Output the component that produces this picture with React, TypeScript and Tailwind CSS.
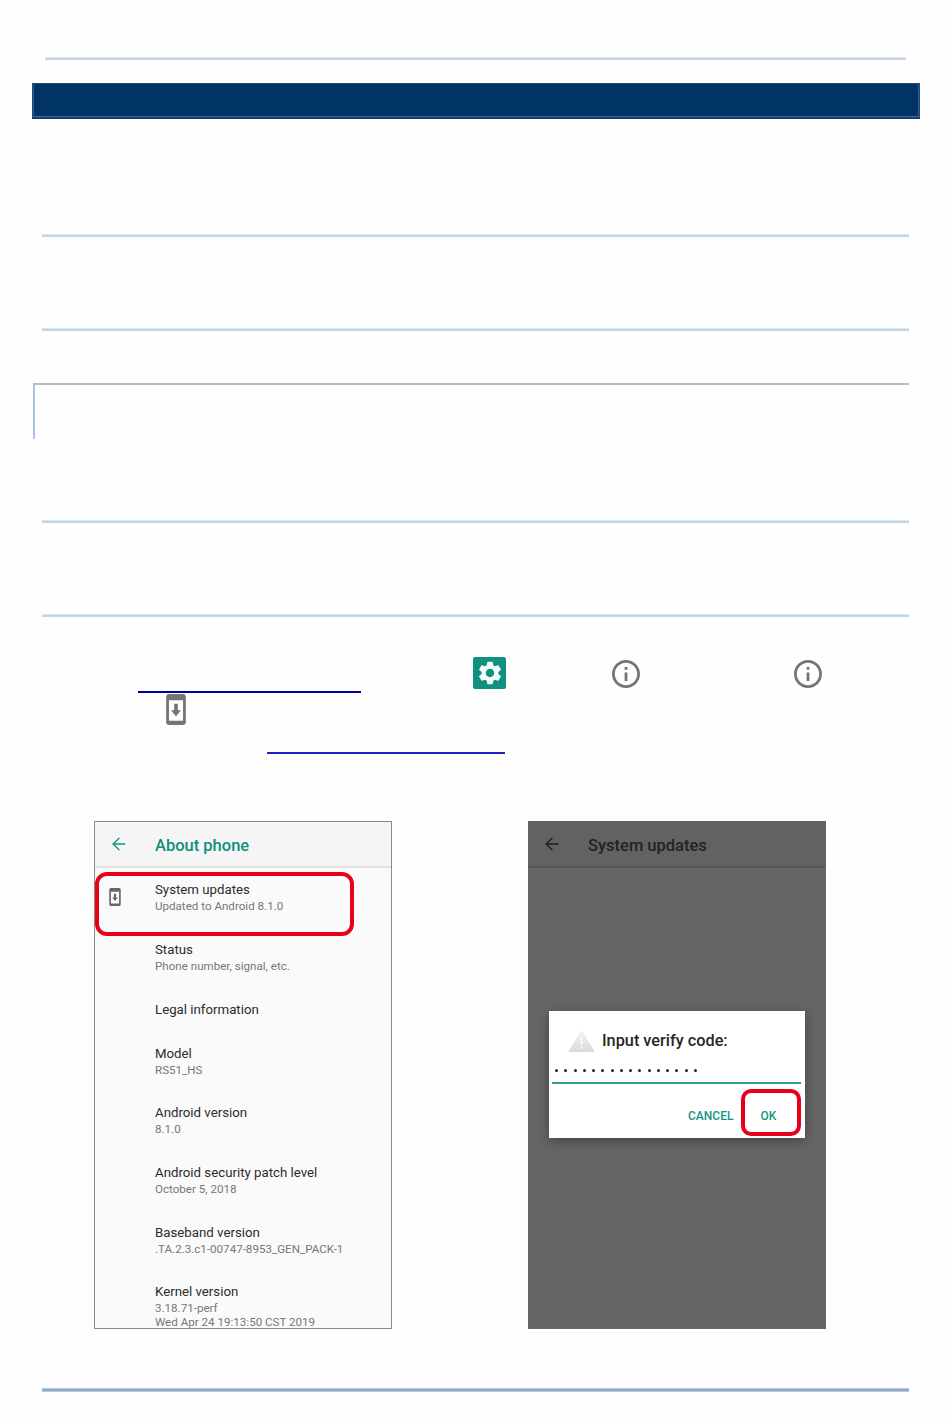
import React from 'react';
import { ArrowLeft } from 'lucide-react';
import { MdSettings } from 'react-icons/md';

const aboutRows = [
  { title: 'System updates', subs: ['Updated to Android 8.1.0'], height: 'h-[60px]' },
  { title: 'Status', subs: ['Phone number, signal, etc.'], height: 'h-[60px]' },
  { title: 'Legal information', subs: [], height: 'h-[44px]' },
  { title: 'Model', subs: ['RS51_HS'], height: 'h-[59px]' },
  { title: 'Android version', subs: ['8.1.0'], height: 'h-[60px]' },
  { title: 'Android security patch level', subs: ['October 5, 2018'], height: 'h-[60px]' },
  { title: 'Baseband version', subs: ['.TA.2.3.c1-00747-8953_GEN_PACK-1'], height: 'h-[59px]' },
  { title: 'Kernel version', subs: ['3.18.71-perf', 'Wed Apr 24 19:13:50 CST 2019'], height: 'h-[45px]' },
];

function InfoIcon({ className }: { className: string }) {
  return (
    <svg viewBox="2 2 20 20" className={className} fill="#757575">
      <path d="M11 7h2v2h-2zm0 4h2v6h-2zm1-9C6.48 2 2 6.48 2 12s4.48 10 10 10 10-4.48 10-10S17.52 2 12 2zm0 18c-4.41 0-8-3.59-8-8s3.59-8 8-8 8 3.59 8 8-3.59 8-8 8z" />
    </svg>
  );
}

function UpdateIcon({ className, fill }: { className: string; fill: string }) {
  return (
    <svg viewBox="5 1 14 22" className={className} fill={fill}>
      <path d="M17 1.01L7 1c-1.1 0-2 .9-2 2v18c0 1.1.9 2 2 2h10c1.1 0 2-.9 2-2V3c0-1.1-.9-1.99-2-1.99zM17 20H7V5.5h10V20zm-1.5-7.5h-2.2V8h-2.6v4.5H8.5l3.5 4.5 3.5-4.5z" />
    </svg>
  );
}

function Rule({ className }: { className: string }) {
  return <div className={`h-[3px] border-t border-[#dbe7f3] bg-[#c3d4e7] ${className}`} />;
}

function AboutPhone() {
  return (
    <div className="relative w-[298px] h-[508px] overflow-hidden border border-[#8a8a8a] bg-[#fafafa] font-['Roboto',sans-serif]">
      <div className="flex items-center h-[46px] bg-[#f5f5f5] border-b-2 border-[#e2e2e2]">
        <ArrowLeft className="ml-[14px] w-[20px] h-[20px] text-[#16957f]" strokeWidth={1.6} />
        <span className="ml-[26px] mt-[5px] text-[16.5px] font-medium text-[#0f8f7c]">About phone</span>
      </div>
      <div className="pt-[13px]">
        {aboutRows.map((row) => (
          <div key={row.title} className={`pl-[60px] ${row.height}`}>
            <div className="text-[13.25px] leading-[17px] text-[#2c2c2c]">{row.title}</div>
            {row.subs.map((sub, i) => (
              <div key={sub} className={`text-[11.6px] text-[#777777] ${i === 0 ? 'leading-[17px]' : '-mt-[2px] leading-[14px]'}`}>
                {sub}
              </div>
            ))}
          </div>
        ))}
      </div>
      <UpdateIcon className="absolute left-[14px] top-[66px] w-[12px] h-[18px]" fill="#666666" />
      <div className="absolute left-0 top-[50px] w-[259px] h-[64px] rounded-[12px] border-4 border-[#e6001a]" />
    </div>
  );
}

function VerifyPhone() {
  return (
    <div className="w-[298px] h-[508px] bg-[#666666] font-['Roboto',sans-serif]">
      <div className="flex items-center h-[47px] bg-[#626262] border-b-2 border-[#585858]">
        <ArrowLeft className="ml-[14px] w-[20px] h-[20px] text-[#1f1f1f]" strokeWidth={1.6} />
        <span className="ml-[26px] mt-[5px] text-[16.5px] font-medium text-[#222222]">System updates</span>
      </div>
      <div className="pl-[21px] pt-[143px]">
        <div className="relative w-[256px] h-[127px] bg-white shadow-[0_3px_12px_rgba(0,0,0,0.35)]">
          <div className="flex items-center pl-[19px] pt-[18px]">
            <svg viewBox="0 0 26 22" className="w-[27px] h-[23px]">
              <defs>
                <linearGradient id="warnFill" x1="0" y1="0" x2="0" y2="1">
                  <stop offset="0" stopColor="#f6f6f6" />
                  <stop offset="1" stopColor="#d9d9d9" />
                </linearGradient>
              </defs>
              <path d="M13 1 L25.5 21 Q25.5 22 24 22 H2 Q.5 22 .5 21 Z" fill="url(#warnFill)" />
              <rect x="12" y="8" width="2" height="7" fill="#fbfbfb" />
              <rect x="12" y="17" width="2" height="2" fill="#fbfbfb" />
            </svg>
            <span className="ml-[7px] text-[16.3px] font-medium leading-[23px] text-[#262626]">Input verify code:</span>
          </div>
          <div className="flex justify-between w-[142px] ml-[6px] mt-[17px]">
            {Array.from({ length: 16 }).map((_, i) => (
              <span key={i} className="w-[3px] h-[3px] rounded-full bg-[#222222]" />
            ))}
          </div>
          <div className="ml-[3px] mt-[10px] w-[249px] h-[2px] bg-[#2a9d8f]" />
          <div className="flex items-center pl-[139px] pt-[25px] text-[12px] font-medium leading-[14px] text-[#16957f]">
            <span>CANCEL</span>
            <span className="ml-[27px]">OK</span>
          </div>
          <div className="absolute left-[192px] top-[78px] w-[60px] h-[47px] rounded-[10px] border-4 border-[#e6001a]" />
        </div>
      </div>
    </div>
  );
}

export default function App() {
  return (
    <div className="w-[950px] h-[1419px] bg-[#fefefe] pt-[57px] overflow-hidden">
      <Rule className="ml-[45px] w-[861px]" />
      <div className="flex flex-col ml-[32px] mt-[23px] w-[888px] h-[36px] bg-[#003366] border-t border-x border-[#24466f]">
        <div className="flex-1 border-x border-[#2f5f92]" />
        <div className="h-px bg-[#3f6b9b]" />
        <div className="h-[2px] bg-[#123c6a]" />
      </div>
      <Rule className="ml-[42px] w-[867px] mt-[115px]" />
      <Rule className="ml-[42px] w-[867px] mt-[91px]" />
      <div className="ml-[33px] mt-[52px] w-[876px] h-[56px] border-t-2 border-l-2 border-t-[#aebccf] border-l-[#a9c1e6]" />
      <Rule className="ml-[42px] w-[867px] mt-[81px]" />
      <Rule className="ml-[42px] w-[867px] mt-[91px]" />
      <div className="flex items-start pl-[473px] mt-[40px] h-[34px]">
        <div className="flex items-center justify-center w-[33px] h-[32px] rounded-[2px] bg-[#0f9080]">
          <MdSettings className="w-[28px] h-[28px] text-[#f3fbfa]" />
        </div>
        <InfoIcon className="ml-[106px] mt-[3px] w-[28px] h-[28px]" />
        <InfoIcon className="ml-[154px] mt-[3px] w-[28px] h-[28px]" />
      </div>
      <div className="ml-[138px] w-[223px] h-[2px] bg-[#0000a8]" />
      <UpdateIcon className="ml-[166px] mt-[1px] w-[20px] h-[31px]" fill="#757575" />
      <div className="ml-[267px] mt-[27px] w-[238px] h-[2px] bg-[#2020c0]" />
      <div className="flex pl-[94px] mt-[67px]">
        <AboutPhone />
        <div className="ml-[136px]">
          <VerifyPhone />
        </div>
      </div>
      <div className="ml-[42px] mt-[59px] w-[867px] h-[4px] border-y border-[#b4c8de] bg-[#8fa9ca]" />
    </div>
  );
}
